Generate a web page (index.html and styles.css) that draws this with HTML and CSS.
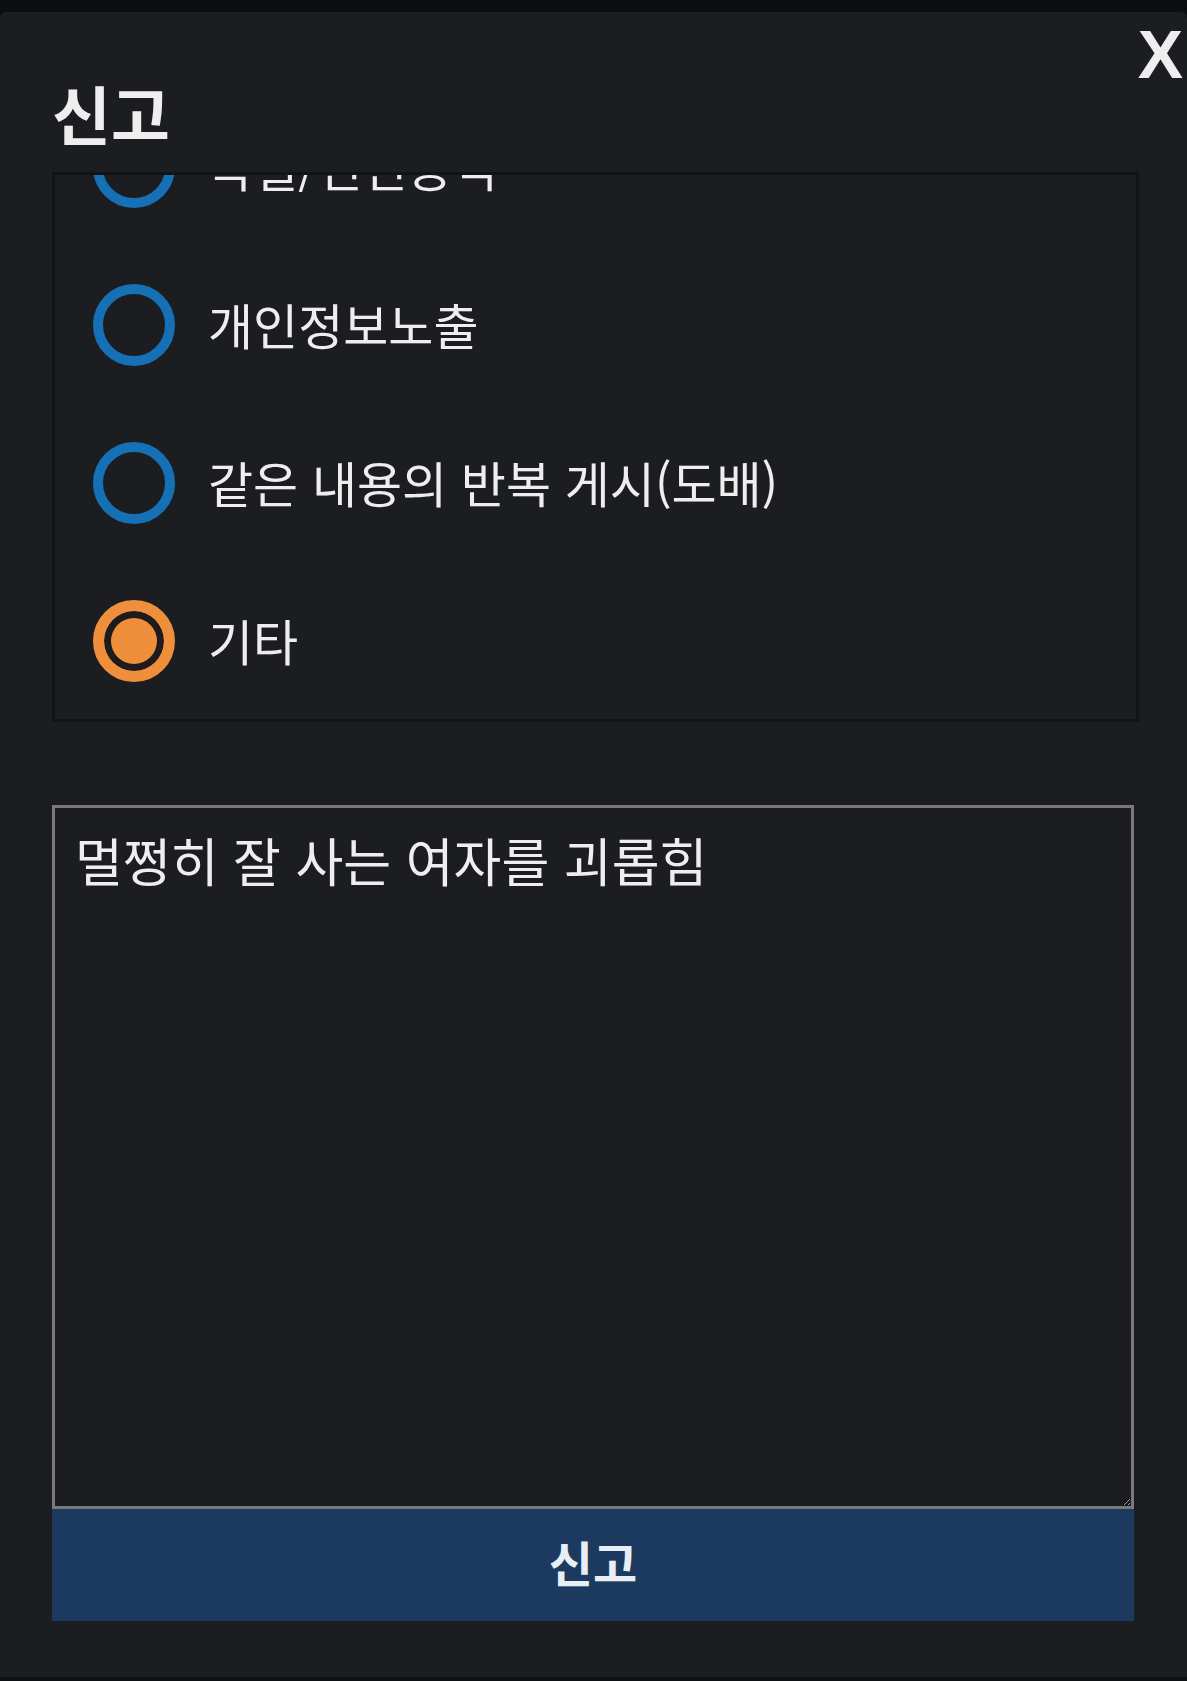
FILE: index.html
```html
<!DOCTYPE html>
<html lang="ko">
<head>
<meta charset="utf-8">
<title>신고</title>
<link rel="stylesheet" href="styles.css">
</head>
<body>
<div class="topbar"></div>
<div class="modal">
  <header class="modal-head">
    <h1 class="title">신고</h1>
    <button class="close" type="button">X</button>
  </header>
  <div class="reasons">
    <ul class="reason-list">
      <li class="reason"><span class="radio"></span><span class="label">욕설/인신공격</span></li>
      <li class="reason"><span class="radio"></span><span class="label">개인정보노출</span></li>
      <li class="reason"><span class="radio"></span><span class="label">같은 내용의 반복 게시(도배)</span></li>
      <li class="reason"><span class="radio checked"></span><span class="label">기타</span></li>
    </ul>
  </div>
  <textarea class="detail">멀쩡히 잘 사는 여자를 괴롭힘</textarea>
  <button class="submit" type="button">신고</button>
</div>
<div class="bottombar"></div>
</body>
</html>
```
FILE: styles.css
```css
* { box-sizing: border-box; }
html, body { margin: 0; padding: 0; }
body {
  background: #0c0d0f;
  font-family: "Noto Sans CJK KR", "Noto Sans", sans-serif;
  color: #eeeeee;
  width: 1187px;
  height: 1681px;
  overflow: hidden;
}
.topbar { height: 12px; background: #0c0d0f; }
.modal {
  position: relative;
  height: 1665px;
  background: #1b1d21;
  border-radius: 6px 6px 0 0;
  padding: 68px 48px 0 52px;
}
.bottombar { height: 4px; background: #0f1012; }
.modal-head { height: 92px; }
.title {
  margin: 0;
  font-size: 64px;
  line-height: 64px;
  font-weight: 700;
  color: #eeeeee;
}
.close {
  position: absolute;
  top: 8px;
  right: 4px;
  padding: 0;
  border: 0;
  background: none;
  color: #eeeeee;
  font-family: "Liberation Sans", Arial, sans-serif;
  font-weight: 700;
  font-size: 68px;
  line-height: 68px;
}
.reasons {
  width: 1087px;
  height: 550px;
  border: 3px solid #121316;
  overflow: hidden;
}
.reason-list {
  list-style: none;
  margin: -87px 0 0 0;
  padding: 0;
}
.reason {
  height: 158px;
  display: flex;
  align-items: center;
  gap: 33px;
  padding-left: 38px;
}
.radio {
  flex: none;
  width: 82px;
  height: 82px;
  border-radius: 50%;
  border: 10px solid #1670b6;
}
.radio.checked {
  border: 11px solid #ef8f3c;
  background: #ef8f3c;
  box-shadow: inset 0 0 0 7px #1d1b1b;
}
.label {
  font-size: 49px;
  line-height: 1;
  color: #eeeeee;
  padding-bottom: 4px;
}
.detail {
  display: block;
  margin-top: 83px;
  width: 1082px;
  height: 704px;
  border: 3px solid #7a7a7a;
  background: #1b1d21;
  color: #eeeeee;
  font-family: "Noto Sans CJK KR", "Noto Sans", sans-serif;
  font-size: 52px;
  line-height: 1.2;
  padding: 21px 20px 18px;
  outline: none;
}
.submit {
  display: block;
  width: 1082px;
  height: 112px;
  border: 0;
  padding: 0 0 8px 0;
  background: #1c3a60;
  color: #e9eef5;
  font-family: "Noto Sans CJK KR", "Noto Sans", sans-serif;
  font-weight: 700;
  font-size: 48px;
  line-height: 1;
}
```
